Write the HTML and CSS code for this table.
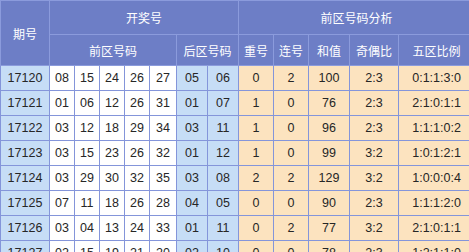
FILE: index.html
```html
<!DOCTYPE html>
<html lang="zh">
<head>
<meta charset="utf-8">
<link rel="stylesheet" href="styles.css">
</head>
<body>
<table class="grid">
  <colgroup>
    <col class="c-id"><col class="c-f"><col class="c-f"><col class="c-f"><col class="c-f"><col class="c-f5">
    <col class="c-b"><col class="c-b"><col class="c-a1"><col class="c-a1"><col class="c-a2"><col class="c-a3"><col class="c-a4">
  </colgroup>
  <thead>
    <tr class="h1">
      <th rowspan="2">期号</th>
      <th colspan="7">开奖号</th>
      <th colspan="5">前区号码分析</th>
    </tr>
    <tr class="h2">
      <th colspan="5">前区号码</th>
      <th colspan="2">后区号码</th>
      <th>重号</th><th>连号</th><th>和值</th><th>奇偶比</th><th>五区比例</th>
    </tr>
  </thead>
  <tbody>
    <tr><td class="id">17120</td><td>08</td><td>15</td><td>24</td><td>26</td><td>27</td><td class="bk">05</td><td class="bk">06</td><td class="an">0</td><td class="an">2</td><td class="an">100</td><td class="an">2:3</td><td class="an">0:1:1:3:0</td></tr>
    <tr><td class="id">17121</td><td>01</td><td>06</td><td>12</td><td>26</td><td>31</td><td class="bk">01</td><td class="bk">07</td><td class="an">1</td><td class="an">0</td><td class="an">76</td><td class="an">2:3</td><td class="an">2:1:0:1:1</td></tr>
    <tr><td class="id">17122</td><td>03</td><td>12</td><td>18</td><td>29</td><td>34</td><td class="bk">03</td><td class="bk">11</td><td class="an">1</td><td class="an">0</td><td class="an">96</td><td class="an">2:3</td><td class="an">1:1:1:0:2</td></tr>
    <tr><td class="id">17123</td><td>03</td><td>15</td><td>23</td><td>26</td><td>32</td><td class="bk">01</td><td class="bk">12</td><td class="an">1</td><td class="an">0</td><td class="an">99</td><td class="an">3:2</td><td class="an">1:0:1:2:1</td></tr>
    <tr><td class="id">17124</td><td>03</td><td>29</td><td>30</td><td>32</td><td>35</td><td class="bk">03</td><td class="bk">08</td><td class="an">2</td><td class="an">2</td><td class="an">129</td><td class="an">3:2</td><td class="an">1:0:0:0:4</td></tr>
    <tr><td class="id">17125</td><td>07</td><td>11</td><td>18</td><td>26</td><td>28</td><td class="bk">04</td><td class="bk">05</td><td class="an">0</td><td class="an">0</td><td class="an">90</td><td class="an">2:3</td><td class="an">1:1:1:2:0</td></tr>
    <tr><td class="id">17126</td><td>03</td><td>04</td><td>13</td><td>24</td><td>33</td><td class="bk">01</td><td class="bk">11</td><td class="an">0</td><td class="an">2</td><td class="an">77</td><td class="an">3:2</td><td class="an">2:1:0:1:1</td></tr>
    <tr><td class="id">17127</td><td>02</td><td>15</td><td>19</td><td>21</td><td>20</td><td class="bk">02</td><td class="bk">10</td><td class="an">0</td><td class="an">0</td><td class="an">78</td><td class="an">2:3</td><td class="an">1:2:1:1:0</td></tr>
  </tbody>
</table>
</body>
</html>
```

FILE: styles.css
```css
html, body {
  margin: 0;
  padding: 0;
  background: #ffffff;
  overflow: hidden;
}

.grid {
  border-collapse: collapse;
  table-layout: fixed;
  width: 474px;
  font-family: "Liberation Sans", Arial, "Noto Sans CJK SC", sans-serif;
  font-size: 12.5px;
  color: #262626;
}

.c-id { width: 49px; }
.c-f { width: 25px; }
.c-f5 { width: 27px; }
.c-b { width: 31px; }
.c-a1 { width: 35px; }
.c-a2 { width: 41px; }
.c-a3 { width: 49px; }
.c-a4 { width: 76px; }

.grid th {
  background: #6d7ec6;
  color: #ffffff;
  font-family: "Noto Sans CJK SC", sans-serif;
  font-weight: normal;
  font-size: 12px;
  border: 1px solid #8b9bdc;
  padding: 0;
  text-align: center;
}

.grid .h1 th { height: 33px; }
.grid .h2 th { height: 30px; }

.grid td {
  border: 1px solid #8495da;
  height: 24px;
  padding: 0;
  text-align: center;
  background: #ffffff;
}

.grid td.id,
.grid td.bk {
  background: #c6ddf6;
}

.grid td.an {
  background: #fce3bf;
}
```
